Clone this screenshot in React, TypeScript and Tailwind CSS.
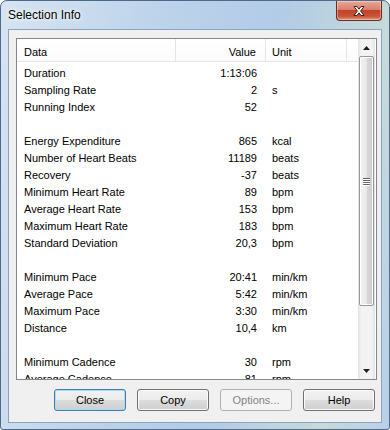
import React from 'react';

const rows: [string, string, string][] = [
  ['Duration', '1:13:06', ''],
  ['Sampling Rate', '2', 's'],
  ['Running Index', '52', ''],
  ['', '', ''],
  ['Energy Expenditure', '865', 'kcal'],
  ['Number of Heart Beats', '11189', 'beats'],
  ['Recovery', '-37', 'beats'],
  ['Minimum Heart Rate', '89', 'bpm'],
  ['Average Heart Rate', '153', 'bpm'],
  ['Maximum Heart Rate', '183', 'bpm'],
  ['Standard Deviation', '20,3', 'bpm'],
  ['', '', ''],
  ['Minimum Pace', '20:41', 'min/km'],
  ['Average Pace', '5:42', 'min/km'],
  ['Maximum Pace', '3:30', 'min/km'],
  ['Distance', '10,4', 'km'],
  ['', '', ''],
  ['Minimum Cadence', '30', 'rpm'],
  ['Average Cadence', '81', 'rpm'],
];

const btnBase =
  'w-[72px] h-[22px] rounded-[3px] border text-[11px] flex items-center justify-center';
const btnFace =
  'bg-[linear-gradient(to_bottom,#f2f2f2_0%,#ebebeb_50%,#dddddd_50%,#cfcfcf_100%)] text-black';

const CloseGlyph = () => (
  <svg width="14" height="12" viewBox="0 0 14 12">
    <path
      d="M2 1.5 L5 1.5 L7 4.2 L9 1.5 L12 1.5 L8.6 6 L12 10.5 L9 10.5 L7 7.8 L5 10.5 L2 10.5 L5.4 6 Z"
      fill="#ffffff"
      stroke="#4a1f1a"
      strokeWidth="1"
      strokeLinejoin="round"
    />
  </svg>
);

const ScrollBar = () => (
  <div className="w-[17px] h-full flex flex-col bg-[linear-gradient(to_right,#e3e3e3_0%,#f3f3f3_20%,#f3f3f3_80%,#e3e3e3_100%)]">
    <div className="h-[17px] flex items-center justify-center">
      <svg width="7" height="4" viewBox="0 0 7 4">
        <path d="M0 4 L3.5 0 L7 4 Z" fill="#1e1e1e" />
      </svg>
    </div>
    <div className="flex-1 flex flex-col px-[1px]">
      <div className="h-[250px] rounded-[2px] border border-[#979797] shadow-[inset_0_0_0_1px_#ffffff] bg-[linear-gradient(to_right,#f3f3f3_0%,#e8e8e8_50%,#d6d6d6_51%,#cdcdcd_100%)] flex flex-col items-center justify-center gap-[1px]">
        {[0, 1, 2, 3].map((i) => (
          <div key={i} className="w-[7px] h-[1px] bg-[#666666] shadow-[0_1px_0_#ffffff]" />
        ))}
      </div>
    </div>
    <div className="h-[17px] flex items-center justify-center">
      <svg width="7" height="4" viewBox="0 0 7 4">
        <path d="M0 0 L7 0 L3.5 4 Z" fill="#1e1e1e" />
      </svg>
    </div>
  </div>
);

export default function App() {
  return (
    <div
      className="w-[390px] h-[430px] rounded-t-[7px] rounded-b-[3px] border border-[#50688a] bg-[linear-gradient(100deg,#d6e4f2_0%,#bdd3eb_35%,#b2cbe7_60%,#c6dad8_85%,#b9d0ea_100%)] flex flex-col overflow-hidden"
      style={{ fontFamily: '"Liberation Sans", Arial, sans-serif' }}
    >
      <div className="h-[28px] flex justify-between items-start shrink-0">
        <div className="pl-[7px] pt-[7px] text-[12px] leading-[15px] text-black [text-shadow:0_0_6px_#ffffff,0_0_3px_#ffffff]">
          Selection Info
        </div>
        <div className="mr-[7px] w-[46px] h-[20px] rounded-b-[4px] border border-t-0 border-[#6b2a22] bg-[linear-gradient(to_bottom,#e9a99a_0%,#d8806b_45%,#c1432b_50%,#c7533a_80%,#e09a7a_100%)] shadow-[inset_0_0_0_1px_rgba(255,255,255,0.35)] flex items-center justify-center">
          <CloseGlyph />
        </div>
      </div>
      <div className="flex-1 mx-[7px] mb-[6px] border border-[#8ea3bd] bg-[#f0f0f0] flex flex-col">
        <div className="mt-[8px] ml-[7px] w-[361px] h-[342px] border border-[#828790] bg-white flex overflow-hidden">
          <div className="w-[341px] h-full flex flex-col overflow-hidden text-[11px] text-black">
            <div className="h-[23px] shrink-0 flex border-b border-[#e5e5e5] bg-[linear-gradient(to_bottom,#ffffff,#fbfbfb)]">
              <div className="w-[159px] pl-[7px] pt-[4px] flex items-center border-r border-[#e5e5e5]">Data</div>
              <div className="w-[90px] pr-[9px] pt-[4px] flex items-center justify-end border-r border-[#e5e5e5]">Value</div>
              <div className="w-[81px] pl-[6px] pt-[4px] flex items-center border-r border-[#e5e5e5]">Unit</div>
              <div className="flex-1" />
            </div>
            <div className="pt-[3px] flex flex-col">
              {rows.map(([label, value, unit], i) => (
                <div key={i} className="h-[17px] shrink-0 flex items-center">
                  <div className="w-[159px] pl-[7px] whitespace-nowrap">{label}</div>
                  <div className="w-[90px] pr-[9px] text-right">{value}</div>
                  <div className="w-[81px] pl-[6px]">{unit}</div>
                </div>
              ))}
            </div>
          </div>
          <ScrollBar />
        </div>
        <div className="mt-[9px] pl-[45px] flex gap-[11px]">
          <div className={`${btnBase} ${btnFace} border-[#3c7fb1] shadow-[inset_0_0_0_1px_#a7dcf5]`}>Close</div>
          <div className={`${btnBase} ${btnFace} border-[#707070] shadow-[inset_0_0_0_1px_#fbfbfb]`}>Copy</div>
          <div className={`${btnBase} border-[#adb2b5] bg-[#f4f4f4] text-[#838383]`}>Options...</div>
          <div className={`${btnBase} ${btnFace} border-[#707070] shadow-[inset_0_0_0_1px_#fbfbfb]`}>Help</div>
        </div>
      </div>
    </div>
  );
}
